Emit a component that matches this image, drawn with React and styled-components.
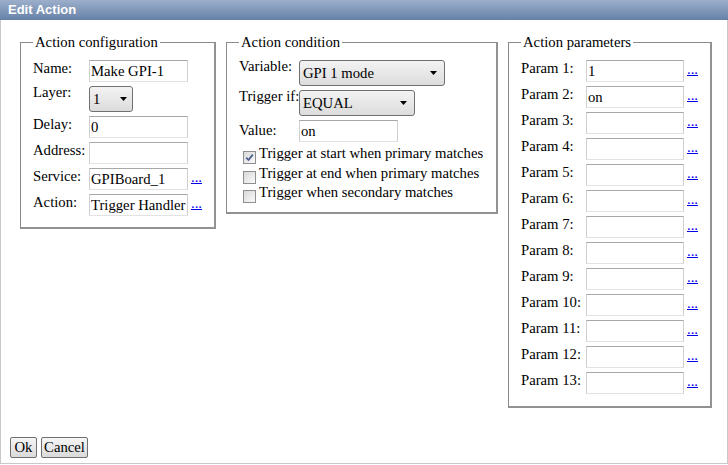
import React from 'react'
import styled, { createGlobalStyle } from 'styled-components'

const GlobalStyle = createGlobalStyle`
    html, body {
        margin: 0;
        padding: 0;
        background: #fff;
    }
    body {
        font-family: 'Liberation Serif', 'Times New Roman', serif;
        font-size: 14.7px;
        color: #000;
    }
`

const Dialog = styled.div`
    width: 728px;
    height: 464px;
    display: flex;
    flex-direction: column;
`
const TitleBar = styled.div`
    height: 20px;
    flex-shrink: 0;
    padding-left: 8px;
    background: linear-gradient(#9cafcb, #6681a8);
    color: #fff;
    font: bold 13px 'Liberation Sans', Arial, sans-serif;
    line-height: 20px;
`
const Body = styled.div`
    flex: 1;
    display: flex;
    flex-direction: column;
    border: 1px solid #c8c8c8;
    border-top: none;
`
const Groups = styled.div`
    display: flex;
    align-items: flex-start;
    gap: 10px;
    padding: 14px 0 0 19px;
`
const Group = styled.fieldset`
    margin: 0;
    width: ${props => props.$width}px;
    box-sizing: border-box;
    min-width: 0;
    border: 1px solid #8a8a8a;
    border-right: 2px solid #929292;
    border-bottom: 2px solid #929292;
    padding: 9px 10px ${props => props.$bottom}px 12px;
`
const Legend = styled.legend`
    padding: 0 2px;
    line-height: 17px;
`
const FormGrid = styled.div`
    display: grid;
    grid-template-columns: ${props => props.$cols};
    row-gap: 4px;
    align-items: start;
`
const Label = styled.label`
    line-height: 17px;
    white-space: nowrap;
    margin-top: ${props => props.$tight ? '-2px' : props.$low ? '1.5px' : '0'};
`
const TextInput = styled.input`
    width: ${props => props.$width || 99}px;
    height: 22px;
    box-sizing: border-box;
    margin: 0;
    padding: 0 1px;
    border: 1px solid;
    border-color: #a8a8a8 #d0d0d0 #e2e2e2 #d0d0d0;
    background: #fff;
    font: inherit;
    color: #000;
    outline: none;
`
const SelectWrap = styled.span`
    position: relative;
    display: inline-block;
    width: ${props => props.$width}px;
    height: 26px;
`
const Select = styled.select`
    appearance: none;
    width: 100%;
    height: 100%;
    box-sizing: border-box;
    margin: 0;
    padding: 0 0 0 3px;
    border: 1px solid #707070;
    border-radius: 3px;
    background: linear-gradient(#f3f3f3, #dcdcdc);
    font: inherit;
    color: #000;
    outline: none;
`
const Arrow = styled.svg`
    position: absolute;
    right: ${props => props.$right}px;
    top: 11px;
    pointer-events: none;
`
const More = styled.a`
    margin-left: 3px;
    padding-top: 1px;
    line-height: 17px;
    color: #0000ee;
    text-decoration: underline;
`
const CheckList = styled.div`
    grid-column: 1 / -1;
    margin-top: -2px;
    display: flex;
    flex-direction: column;
`
const CheckRow = styled.label`
    display: flex;
    align-items: flex-start;
    gap: 3px;
    height: 19.5px;
    line-height: 19.5px;
    white-space: nowrap;
`
const Box = styled.span`
    width: 13px;
    height: 13px;
    box-sizing: border-box;
    margin: 7px 0 0 4px;
    border: 1px solid #8e8f8f;
    background: linear-gradient(135deg, #d8d8d8, #fafafa);
    display: flex;
    align-items: center;
    justify-content: center;
`
const Footer = styled.div`
    margin-top: auto;
    display: flex;
    gap: 4px;
    padding: 0 0 5px 9px;
`
const Button = styled.button`
    width: ${props => props.$width}px;
    height: 21px;
    margin: 0;
    padding: 0;
    border: 1px solid #707070;
    border-radius: 2px;
    background: linear-gradient(#f6f6f6, #dadada);
    font: inherit;
    color: #000;
`

const DropArrow = ({ right }) => (
    <Arrow $right={right} width='7' height='4' viewBox='0 0 7 4'>
        <polygon points='0,0 7,0 3.5,4' fill='#000' />
    </Arrow>
)

const Dropdown = ({ width, right, value, options }) => (
    <SelectWrap $width={width}>
        <Select defaultValue={value}>
            {options.map(o => <option key={o}>{o}</option>)}
        </Select>
        <DropArrow right={right} />
    </SelectWrap>
)

const Check = ({ checked, children }) => (
    <CheckRow>
        <Box>
            {checked &&
                <svg width='9' height='9' viewBox='0 0 9 9'>
                    <path d='M1.2 4.6 L3.5 7 L7.8 1.6' fill='none' stroke='#4c5f8e' strokeWidth='1.8' />
                </svg>}
        </Box>
        <span>{children}</span>
    </CheckRow>
)

const params = ['1', 'on', '', '', '', '', '', '', '', '', '', '', '']

export default function App() {
    return (
        <Dialog>
            <GlobalStyle />
            <TitleBar>Edit Action</TitleBar>
            <Body>
                <Groups>
                    <Group $width={196} $bottom={11}>
                        <Legend>Action configuration</Legend>
                        <FormGrid $cols='56px 99px auto'>
                            <Label>Name:</Label>
                            <TextInput defaultValue='Make GPI-1' />
                            <span />
                            <Label $tight>Layer:</Label>
                            <Dropdown width={44} right={6} value='1' options={['1', '2', '3']} />
                            <span />
                            <Label>Delay:</Label>
                            <TextInput defaultValue='0' />
                            <span />
                            <Label>Address:</Label>
                            <TextInput defaultValue='' />
                            <span />
                            <Label>Service:</Label>
                            <TextInput defaultValue='GPIBoard_1' />
                            <More href='#'>...</More>
                            <Label>Action:</Label>
                            <TextInput defaultValue='Trigger Handler' />
                            <More href='#'>...</More>
                        </FormGrid>
                    </Group>
                    <Group $width={272} $bottom={9}>
                        <Legend>Action condition</Legend>
                        <FormGrid $cols='60px auto'>
                            <Label $tight>Variable:</Label>
                            <Dropdown width={146} right={8} value='GPI 1 mode' options={['GPI 1 mode', 'GPI 2 mode']} />
                            <Label $tight>Trigger if:</Label>
                            <Dropdown width={116} right={8} value='EQUAL' options={['EQUAL', 'NOT EQUAL']} />
                            <Label $low>Value:</Label>
                            <TextInput defaultValue='on' />
                            <CheckList>
                                <Check checked>Trigger at start when primary matches</Check>
                                <Check>Trigger at end when primary matches</Check>
                                <Check>Trigger when secondary matches</Check>
                            </CheckList>
                        </FormGrid>
                    </Group>
                    <Group $width={204} $bottom={12}>
                        <Legend>Action parameters</Legend>
                        <FormGrid $cols='65px 98px auto'>
                            {params.map((v, i) => (
                                <React.Fragment key={i}>
                                    <Label>Param {i + 1}:</Label>
                                    <TextInput $width={98} defaultValue={v} />
                                    <More href='#'>...</More>
                                </React.Fragment>
                            ))}
                        </FormGrid>
                    </Group>
                </Groups>
                <Footer>
                    <Button $width={27}>Ok</Button>
                    <Button $width={47}>Cancel</Button>
                </Footer>
            </Body>
        </Dialog>
    )
}
